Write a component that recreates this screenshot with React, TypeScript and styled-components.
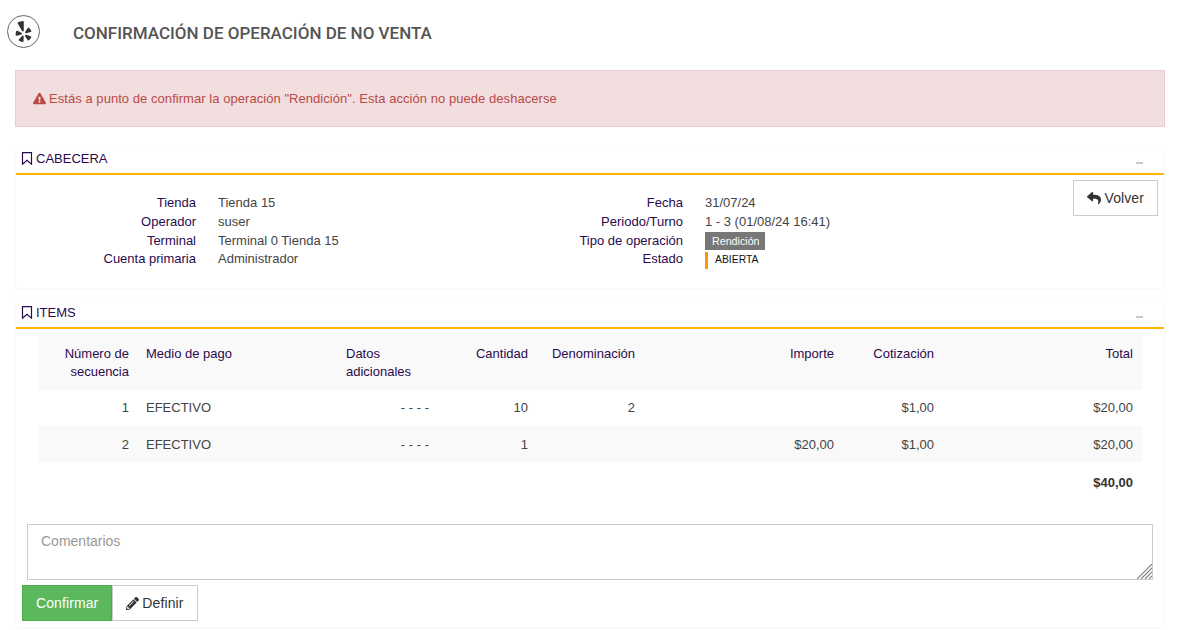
import React from "react";
import styled, { createGlobalStyle } from "styled-components";
import { FaExclamationTriangle, FaPencilAlt, FaReply, FaYelp } from "react-icons/fa";

const GlobalStyle = createGlobalStyle`
  html, body {
    margin: 0;
    padding: 0;
    background: #fff;
    font-family: "Liberation Sans", Arial, sans-serif;
    font-size: 13px;
    color: #333;
  }
  * { box-sizing: border-box; }
`;

const Page = styled.div`
  width: 1187px;
  height: 630px;
  overflow: hidden;
  padding: 15px 22px 0 15px;
`;

const TitleBar = styled.header`
  display: flex;
  align-items: center;
  height: 33px;
  margin-left: -8px;
  margin-bottom: 22px;
`;

const LogoRing = styled.span`
  display: flex;
  align-items: center;
  justify-content: center;
  width: 33px;
  height: 33px;
  border: 1.5px solid #666;
  border-radius: 50%;
  color: #333;
  font-size: 21px;
`;

const Title = styled.h1`
  margin: 2px 0 0 33px;
  font: 500 17px/20px Roboto, sans-serif;
  color: #555;
`;

const Alert = styled.div`
  display: flex;
  align-items: center;
  gap: 3px;
  height: 57px;
  padding: 0 17px;
  margin-bottom: 18px;
  background: #f2dede;
  border: 1px solid #ebccd1;
  color: #b94a48;
  letter-spacing: 0.05px;
`;

const Panel = styled.section`
  margin: 0 1px 11px;
  border-radius: 4px;
  box-shadow: 0 1px 3px rgba(0, 0, 0, 0.05);
`;

const PanelHeader = styled.div`
  display: flex;
  align-items: center;
  justify-content: space-between;
  height: 30px;
  padding: 0 21px 1px 5px;
  border-bottom: 2px solid #ffb300;
`;

const PanelTitle = styled.h2`
  display: flex;
  align-items: center;
  gap: 3px;
  margin: 0;
  font: 400 13px/16px "Liberation Sans", Arial, sans-serif;
  color: #2c0a4e;
`;

const Collapse = styled.span`
  width: 7px;
  height: 2px;
  margin-top: 8px;
  background: #c8c8c8;
`;

const HeaderBody = styled.div`
  display: grid;
  grid-template-columns: 489px 1fr auto;
  height: 113px;
  padding: 5px 6px 0 0;
`;

const InfoList = styled.dl<{ $label: number }>`
  display: grid;
  grid-template-columns: ${(p) => p.$label}px 1fr;
  grid-auto-rows: 18.8px;
  column-gap: 22px;
  align-content: start;
  margin: 14px 0 0;
`;

const InfoLabel = styled.dt`
  text-align: right;
  color: #2c0a4e;
  line-height: 18px;
`;

const InfoValue = styled.dd`
  margin: 0;
  line-height: 18px;
  color: #444;
`;

const TypeTag = styled.span`
  display: inline-block;
  padding: 0 5px 0 7px;
  height: 18px;
  background: #777;
  color: #fff;
  font-size: 10.7px;
  line-height: 18px;
`;

const StateTag = styled.span`
  display: inline-block;
  height: 17px;
  margin-top: 1px;
  padding-left: 7px;
  border-left: 3px solid #ff9800;
  color: #111;
  font-size: 10.4px;
  line-height: 15px;
`;

const Button = styled.button<{ $primary?: boolean }>`
  display: inline-flex;
  align-items: center;
  justify-content: center;
  gap: 3px;
  height: 36px;
  padding: 0 13px;
  background: ${(p) => (p.$primary ? "#5cb85c" : "#fff")};
  border: 1px solid ${(p) => (p.$primary ? "#4cae4c" : "#ccc")};
  border-radius: 0;
  color: ${(p) => (p.$primary ? "#fff" : "#333")};
  font: 400 14px/20px "Liberation Sans", Arial, sans-serif;
  letter-spacing: 0.1px;
`;

const ItemsBody = styled.div`
  padding: 6px 6px 6px 6px;
`;

const Table = styled.table`
  width: 1104px;
  margin-left: 16px;
  table-layout: fixed;
  border-collapse: collapse;
`;

const HeadCell = styled.th<{ $left?: boolean }>`
  height: 55px;
  padding: 10px 9px 0 8px;
  vertical-align: top;
  font-weight: 400;
  line-height: 18px;
  color: #2c0a4e;
  background: #f9f9f9;
  text-align: ${(p) => (p.$left ? "left" : "right")};
`;

const Row = styled.tr<{ $striped?: boolean }>`
  background: ${(p) => (p.$striped ? "#f9f9f9" : "#fff")};
`;

const Cell = styled.td<{ $left?: boolean }>`
  height: 36px;
  padding: 0 9px 0 8px;
  color: #444;
  text-align: ${(p) => (p.$left ? "left" : "right")};
  tr:first-child > & {
    padding-bottom: 2px;
  }
`;

const TotalCell = styled.td`
  height: 40px;
  padding: 0 9px 0 8px;
  text-align: right;
  font-weight: 700;
  color: #333;
`;

const CommentsBox = styled.div`
  position: relative;
  width: 1126px;
  margin: 22px 0 5px 5px;
`;

const Comments = styled.textarea`
  display: block;
  width: 100%;
  height: 56px;
  padding: 6px 13px;
  border: 1px solid #ccc;
  resize: none;
  font: 400 14px/20px "Liberation Sans", Arial, sans-serif;
  color: #333;
  &::placeholder { color: #999; }
`;

const ResizeGrip = styled.svg`
  position: absolute;
  right: 1px;
  bottom: 1px;
  width: 15px;
  height: 15px;
`;

const Actions = styled.div`
  display: flex;
`;

const Bookmark = () => (
  <svg width="12" height="13" viewBox="0 0 12 13">
    <path d="M1.5 .6h9v11.6L6 8.4 1.5 12.2z" fill="none" stroke="currentColor" strokeWidth="1.2" />
  </svg>
);

const rows = [
  ["1", "EFECTIVO", "- - - -", "10", "2", "", "$1,00", "$20,00"],
  ["2", "EFECTIVO", "- - - -", "1", "", "$20,00", "$1,00", "$20,00"],
];

const colWidths = [100, 200, 100, 99, 107, 199, 100, 199];

const App = () => (
  <Page>
    <GlobalStyle />
    <TitleBar>
      <LogoRing><FaYelp /></LogoRing>
      <Title>CONFIRMACIÓN DE OPERACIÓN DE NO VENTA</Title>
    </TitleBar>

    <Alert>
      <FaExclamationTriangle size={13} />
      Estás a punto de confirmar la operación "Rendición". Esta acción no puede deshacerse
    </Alert>

    <Panel>
      <PanelHeader>
        <PanelTitle><Bookmark />CABECERA</PanelTitle>
        <Collapse />
      </PanelHeader>
      <HeaderBody>
        <InfoList $label={180}>
          <InfoLabel>Tienda</InfoLabel><InfoValue>Tienda 15</InfoValue>
          <InfoLabel>Operador</InfoLabel><InfoValue>suser</InfoValue>
          <InfoLabel>Terminal</InfoLabel><InfoValue>Terminal 0 Tienda 15</InfoValue>
          <InfoLabel>Cuenta primaria</InfoLabel><InfoValue>Administrador</InfoValue>
        </InfoList>
        <InfoList $label={178}>
          <InfoLabel>Fecha</InfoLabel><InfoValue>31/07/24</InfoValue>
          <InfoLabel>Periodo/Turno</InfoLabel><InfoValue>1 - 3 (01/08/24 16:41)</InfoValue>
          <InfoLabel>Tipo de operación</InfoLabel><InfoValue><TypeTag>Rendición</TypeTag></InfoValue>
          <InfoLabel>Estado</InfoLabel><InfoValue><StateTag>ABIERTA</StateTag></InfoValue>
        </InfoList>
        <Button><FaReply size={14} />Volver</Button>
      </HeaderBody>
    </Panel>

    <Panel>
      <PanelHeader>
        <PanelTitle><Bookmark />ITEMS</PanelTitle>
        <Collapse />
      </PanelHeader>
      <ItemsBody>
        <Table>
          <colgroup>
            {colWidths.map((w, i) => <col key={i} width={w} />)}
          </colgroup>
          <thead>
            <tr>
              <HeadCell>Número de secuencia</HeadCell>
              <HeadCell $left>Medio de pago</HeadCell>
              <HeadCell $left>Datos adicionales</HeadCell>
              <HeadCell>Cantidad</HeadCell>
              <HeadCell>Denominación</HeadCell>
              <HeadCell>Importe</HeadCell>
              <HeadCell>Cotización</HeadCell>
              <HeadCell>Total</HeadCell>
            </tr>
          </thead>
          <tbody>
            {rows.map((r, i) => (
              <Row key={i} $striped={i % 2 === 1}>
                {r.map((v, j) => <Cell key={j} $left={j === 1}>{v}</Cell>)}
              </Row>
            ))}
            <tr>
              <TotalCell colSpan={8}>$40,00</TotalCell>
            </tr>
          </tbody>
        </Table>
        <CommentsBox>
          <Comments placeholder="Comentarios" />
          <ResizeGrip viewBox="0 0 15 15">
            <path d="M0 15L15 0M4 15L15 4M8 15L15 8M12 15L15 12" stroke="#808080" strokeWidth="1.2" fill="none" />
          </ResizeGrip>
        </CommentsBox>
        <Actions>
          <Button $primary>Confirmar</Button>
          <Button><FaPencilAlt size={13} />Definir</Button>
        </Actions>
      </ItemsBody>
    </Panel>
  </Page>
);

export default App;
